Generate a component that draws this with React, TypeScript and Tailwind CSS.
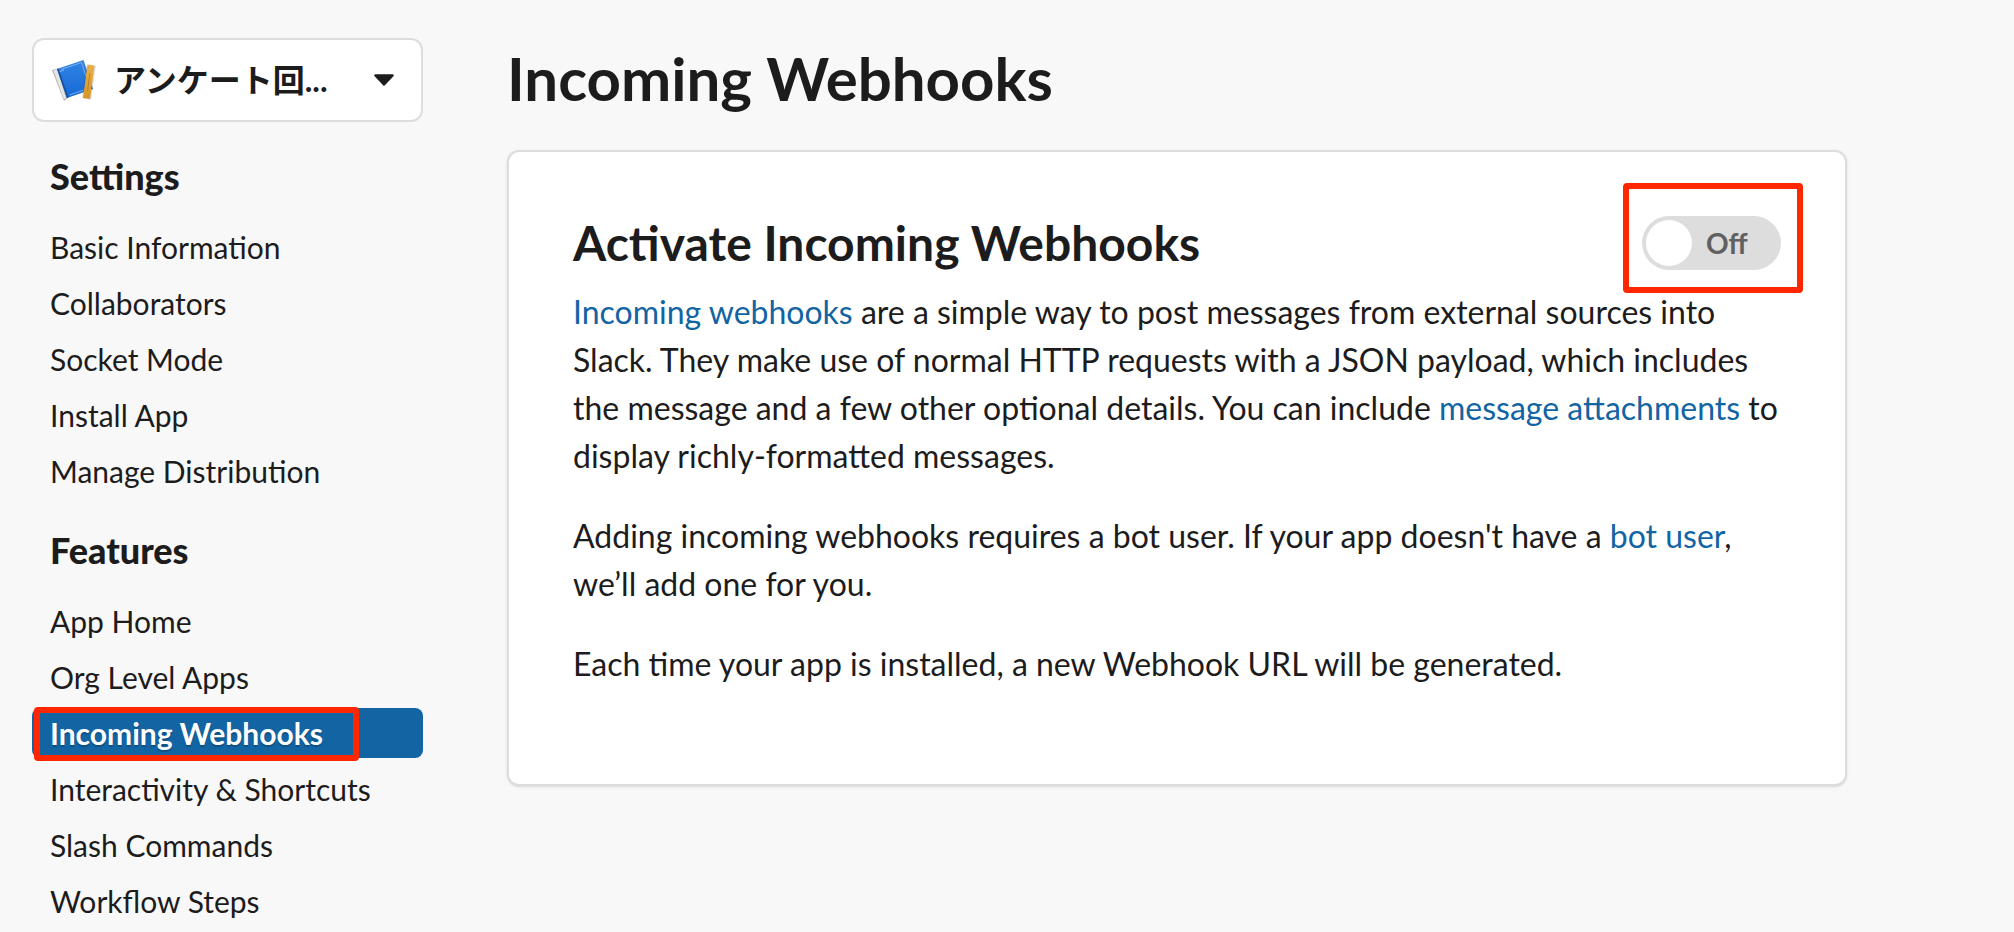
import { useState } from "react";

const sections = [
  {
    title: "Settings",
    items: ["Basic Information", "Collaborators", "Socket Mode", "Install App", "Manage Distribution"],
  },
  {
    title: "Features",
    items: [
      "App Home",
      "Org Level Apps",
      "Incoming Webhooks",
      "Interactivity & Shortcuts",
      "Slash Commands",
      "Workflow Steps",
    ],
  },
];

function AppIcon() {
  return (
    <svg width="44" height="44" viewBox="0 0 44 44" className="shrink-0" aria-hidden="true">
      <defs>
        <linearGradient id="cover" x1="0" y1="0" x2="0" y2="1">
          <stop offset="0" stopColor="#3285e4" />
          <stop offset="1" stopColor="#1469d6" />
        </linearGradient>
        <linearGradient id="ruler" x1="0" y1="0" x2="0" y2="1">
          <stop offset="0" stopColor="#e9b046" />
          <stop offset="1" stopColor="#d99526" />
        </linearGradient>
      </defs>
      <path d="M0 12 L5.500 10.500 L16 40 L12 43 Z" fill="#b4b4b4" />
      <path d="M1.500 12.500 L5 11 L14 40 L12 41.500 Z" fill="#e6e6e6" />
      <path d="M5 11 L31.500 2 L41 31 L15 40 Z" fill="url(#cover)" />
      <path d="M5 11 L6.500 10.500 L16.500 39.500 L15 40 Z" fill="#174f9c" />
      <path d="M9 11.500 L29.500 4.500 L38 30 L17.500 37" fill="none" stroke="#8fbdf2" strokeWidth="0.8" />
      <path d="M7.500 13.500 L11.500 12.500 L11 11" fill="none" stroke="#8fbdf2" strokeWidth="0.8" />
      <path d="M34.500 7 L44 8 L39 42 L30 40 Z" fill="#000" opacity="0.12" />
      <path d="M35.500 6.500 L42.500 7.500 L38 41 L31 40 Z" fill="url(#ruler)" />
      <path d="M38 15 L35.500 33" stroke="#a87b35" strokeWidth="0.8" />
    </svg>
  );
}

function Sidebar() {
  return (
    <aside className="w-[391px] shrink-0">
      <div className="flex h-[84px] items-center rounded-xl border-2 border-[#dddddd] bg-white pr-[27px] pl-[18px]">
        <AppIcon />
        <select
          aria-label="App"
          className="ml-[18px] min-w-0 flex-1 appearance-none bg-transparent font-['Lato','Noto_Sans_CJK_JP',sans-serif] text-[32px] leading-[50px] font-bold outline-none"
        >
          <option>アンケート回...</option>
        </select>
        <svg width="20" height="12" viewBox="0 0 20 12" aria-hidden="true">
          <path d="M1.500 1.500 H18.500 L10 10.500 Z" fill="#1d1c1d" stroke="#1d1c1d" strokeWidth="2.500" strokeLinejoin="round" />
        </svg>
      </div>

      {sections.map((section) => (
        <nav key={section.title} aria-label={section.title} className="mt-7">
          <h3 className="mb-5 pl-[18px] text-[36px] leading-[52px] font-black">{section.title}</h3>
          <ul className="flex flex-col gap-1.5 text-[30px] leading-[50px]">
            {section.items.map((item) => {
              const active = item === "Incoming Webhooks";
              return (
                <li key={item} className="relative">
                  <a
                    href="#"
                    className={
                      active
                        ? "block rounded-lg bg-[#1264a3] pl-[18px] font-bold text-white [text-shadow:0_2px_1px_rgba(0,0,0,0.2)]"
                        : "block rounded-lg pl-[18px]"
                    }
                  >
                    {item}
                  </a>
                  {active && (
                    <span className="pointer-events-none absolute -top-px left-0.5 h-[54px] w-[325px] rounded-sm border-6 border-[#ff2600]" />
                  )}
                </li>
              );
            })}
          </ul>
        </nav>
      ))}
    </aside>
  );
}

function Toggle() {
  const [on, setOn] = useState(false);

  return (
    <div className="relative">
      <label className="flex h-[54px] w-[139px] items-center gap-[14px] rounded-full bg-[#dddddd] pl-1 text-[28px] font-bold text-[#616061]">
        <input
          type="checkbox"
          checked={on}
          onChange={() => setOn(!on)}
          className="size-[46px] appearance-none rounded-full bg-white"
        />
        {on ? "On" : "Off"}
      </label>
      <span className="pointer-events-none absolute -top-[33px] -left-[19px] h-[110px] w-[180px] rounded-sm border-6 border-[#ff2600]" />
    </div>
  );
}

export default function App() {
  return (
    <div className="flex h-screen gap-[84px] overflow-hidden bg-[#f8f8f8] px-8 pt-[38px] font-['Lato',sans-serif] text-[#1d1c1d]">
      <Sidebar />

      <main className="max-w-[1340px] min-w-0 flex-1">
        <h1 className="mb-8 text-[60px] leading-[80px] font-bold">Incoming Webhooks</h1>

        <section className="rounded-xl border-2 border-[#dddddd] bg-white p-16 shadow-sm">
          <div className="mb-[18px] flex h-[54px] items-center justify-between">
            <h2 className="text-[48px] leading-[54px] font-bold">Activate Incoming Webhooks</h2>
            <Toggle />
          </div>
          <div className="text-[32px] leading-[48px] *:mb-8">
            <p>
              <a href="#" className="text-[#1264a3]">Incoming webhooks</a> are a simple way to post messages from
              external sources into Slack. They make use of normal HTTP requests with a JSON payload, which includes the
              message and a few other optional details. You can include{" "}
              <a href="#" className="text-[#1264a3]">message attachments</a> to display richly-formatted messages.
            </p>
            <p>
              Adding incoming webhooks requires a bot user. If your app doesn't have a{" "}
              <a href="#" className="text-[#1264a3]">bot user</a>, we’ll add one for you.
            </p>
            <p>Each time your app is installed, a new Webhook URL will be generated.</p>
          </div>
        </section>
      </main>
    </div>
  );
}
